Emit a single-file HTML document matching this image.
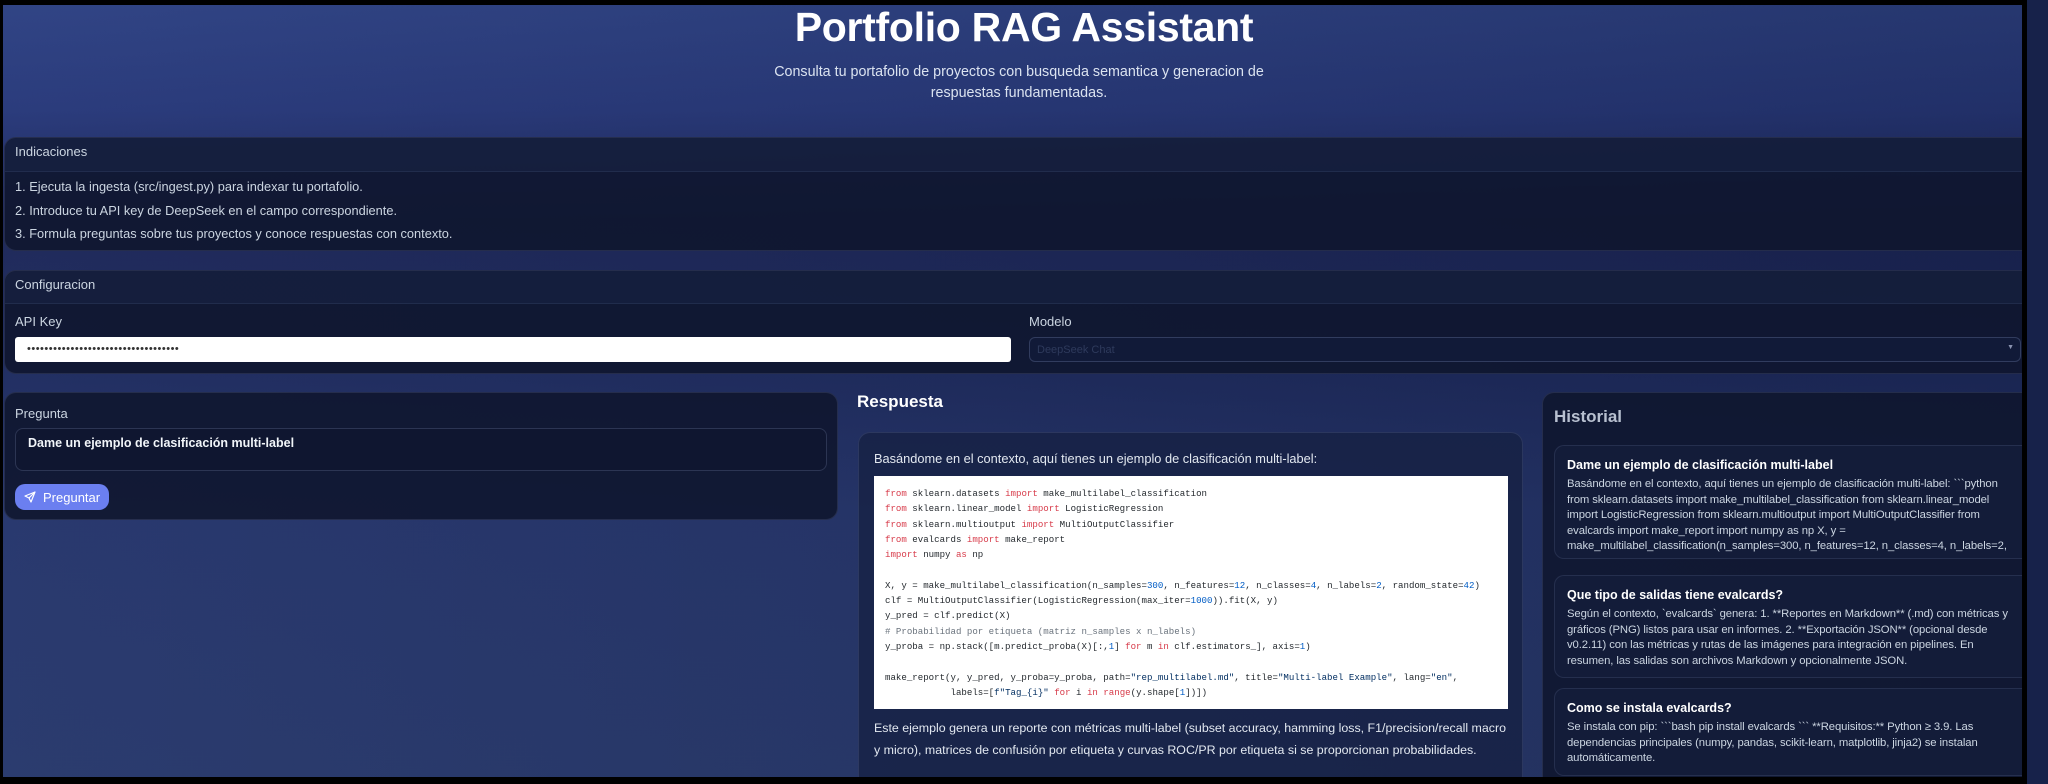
<!DOCTYPE html>
<html><head><meta charset="utf-8"><style>
*{box-sizing:border-box;margin:0;padding:0}
html,body{width:2048px;height:784px;overflow:hidden}
body{position:relative;font-family:"Liberation Sans",sans-serif;color:#e2e8f0;
background:linear-gradient(180deg,#2d4183 0%,#27387a 14%,#1c2658 28%,#1d2a5e 45%,#25356c 65%,#27386c 100%);}
body:before{content:"";position:absolute;inset:0;background:linear-gradient(90deg,rgba(255,255,255,0.02),rgba(0,0,0,0.15));}
.abs{position:absolute}
.title{left:0;width:2048px;top:2px;text-align:center;font-weight:bold;font-size:41px;letter-spacing:-0.3px;color:#fff;line-height:50px}
.sub{left:774px;width:490px;top:62px;text-align:center;font-size:14.3px;line-height:21px;color:#dbe3f0}
.panel{background:rgba(15,22,46,0.88);border:1px solid rgba(148,163,209,0.16);border-radius:12px}
.hd{height:34px;border-bottom:1px solid rgba(148,163,209,0.10);background:rgba(30,42,80,0.35);border-radius:12px 12px 0 0;font-size:13px;color:#cbd5e1;padding:6px 10px}
.lbl{font-size:13px;color:#cbd5e1}
.code{font-family:"Liberation Mono",monospace;font-size:9.1px;line-height:15.3px;color:#24292e;white-space:pre}
.k{color:#d73a49}.n{color:#005cc5}.s{color:#032f62}.c{color:#6a737d}
.item{position:absolute;left:11px;width:480px;background:rgba(20,29,58,0.9);border:1px solid rgba(148,163,209,0.14);border-radius:10px;padding:12px 12px 0 12px;overflow:hidden}
.item b{display:block;font-size:12.5px;color:#fff;margin-bottom:5px}
.item p{font-size:11.3px;line-height:15.6px;color:#cbd5e1;width:450px;letter-spacing:-0.1px}
</style></head><body>
<div class="abs title">Portfolio RAG Assistant</div>
<div class="abs sub">Consulta tu portafolio de proyectos con busqueda semantica y generacion de respuestas fundamentadas.</div>

<div class="abs panel" style="left:4px;top:137px;width:2034px;height:114px">
 <div class="hd">Indicaciones</div>
 <div class="abs lbl" style="left:10px;top:37px;line-height:23.5px;font-size:12.8px">1. Ejecuta la ingesta (src/ingest.py) para indexar tu portafolio.<br>2. Introduce tu API key de DeepSeek en el campo correspondiente.<br>3. Formula preguntas sobre tus proyectos y conoce respuestas con contexto.</div>
</div>

<div class="abs panel" style="left:4px;top:270px;width:2034px;height:104px">
 <div class="hd" style="height:33px">Configuracion</div>
 <div class="abs lbl" style="left:10px;top:43px">API Key</div>
 <div class="abs" style="left:10px;top:66px;width:996px;height:25px;background:#fff;border-radius:3px;color:#333;font-size:11px;padding:6px 12px;letter-spacing:0.5px">•••••••••••••••••••••••••••••••••••</div>
 <div class="abs lbl" style="left:1024px;top:43px">Modelo</div>
 <div class="abs" style="left:1024px;top:66px;width:992px;height:25px;background:#111a38;border:1px solid rgba(148,163,209,0.25);border-radius:6px;font-size:11px;color:#2e3a5c;padding:6px 7px">DeepSeek Chat<span style="position:absolute;right:6px;top:6px;color:#8a93b0;font-size:7px">▼</span></div>
</div>

<div class="abs panel" style="left:4px;top:392px;width:834px;height:128px">
 <div class="abs lbl" style="left:10px;top:13px">Pregunta</div>
 <div class="abs" style="left:10px;top:35px;width:812px;height:43px;background:#0f1630;border:1px solid rgba(148,163,209,0.22);border-radius:8px;font-size:12.5px;font-weight:bold;color:#f1f5f9;padding:7px 12px">Dame un ejemplo de clasificación multi-label</div>
 <div class="abs" style="left:10px;top:91px;width:94px;height:26px;background:#6b7ff0;border-radius:10px;color:#fff;font-size:13px;padding:6px 0 0 28px">
  <svg class="abs" style="left:9px;top:7px" width="12" height="12" viewBox="0 0 24 24" fill="none" stroke="#fff" stroke-width="2.4" stroke-linejoin="round"><path d="M22 2 2 10l8 4 4 8z"/><path d="M22 2 10 14"/></svg>Preguntar</div>
</div>

<div class="abs" style="left:857px;top:392px;font-size:17px;font-weight:bold;color:#fff">Respuesta</div>
<div class="abs panel" style="left:858px;top:432px;width:665px;height:360px;background:rgba(22,32,66,0.75)">
 <div class="abs" style="left:15px;top:18px;font-size:12.8px;color:#e2e8f0">Basándome en el contexto, aquí tienes un ejemplo de clasificación multi-label:</div>
 <div class="abs code" style="left:15px;top:43px;width:634px;height:233px;background:#fff;padding:10px 0 0 11px"><span class="k">from</span> sklearn.datasets <span class="k">import</span> make_multilabel_classification
<span class="k">from</span> sklearn.linear_model <span class="k">import</span> LogisticRegression
<span class="k">from</span> sklearn.multioutput <span class="k">import</span> MultiOutputClassifier
<span class="k">from</span> evalcards <span class="k">import</span> make_report
<span class="k">import</span> numpy <span class="k">as</span> np

X, y = make_multilabel_classification(n_samples=<span class="n">300</span>, n_features=<span class="n">12</span>, n_classes=<span class="n">4</span>, n_labels=<span class="n">2</span>, random_state=<span class="n">42</span>)
clf = MultiOutputClassifier(LogisticRegression(max_iter=<span class="n">1000</span>)).fit(X, y)
y_pred = clf.predict(X)
<span class="c"># Probabilidad por etiqueta (matriz n_samples x n_labels)</span>
y_proba = np.stack([m.predict_proba(X)[:,<span class="n">1</span>] <span class="k">for</span> m <span class="k">in</span> clf.estimators_], axis=<span class="n">1</span>)

make_report(y, y_pred, y_proba=y_proba, path=<span class="s">"rep_multilabel.md"</span>, title=<span class="s">"Multi-label Example"</span>, lang=<span class="s">"en"</span>,
            labels=[<span class="s">f"Tag_{i}"</span> <span class="k">for</span> i <span class="k">in</span> <span class="k">range</span>(y.shape[<span class="n">1</span>])])</div>
 <div class="abs" style="left:15px;top:284px;width:636px;font-size:12.4px;line-height:22px;color:#e2e8f0">Este ejemplo genera un reporte con métricas multi-label (subset accuracy, hamming loss, F1/precision/recall macro y micro), matrices de confusión por etiqueta y curvas ROC/PR por etiqueta si se proporcionan probabilidades.</div>
</div>

<div class="abs panel" style="left:1542px;top:392px;width:496px;height:400px">
 <div class="abs" style="left:11px;top:14px;font-size:17px;font-weight:bold;color:#b8c0d0">Historial</div>
 <div class="item" style="top:52px;height:114px"><b>Dame un ejemplo de clasificación multi-label</b><p>Basándome en el contexto, aquí tienes un ejemplo de clasificación multi-label: &#96;&#96;&#96;python from sklearn.datasets import make_multilabel_classification from sklearn.linear_model import LogisticRegression from sklearn.multioutput import MultiOutputClassifier from evalcards import make_report import numpy as np X, y = make_multilabel_classification(n_samples=300, n_features=12, n_classes=4, n_labels=2,</p></div>
 <div class="item" style="top:182px;height:103px"><b>Que tipo de salidas tiene evalcards?</b><p>Según el contexto, &#96;evalcards&#96; genera: 1. **Reportes en Markdown** (.md) con métricas y gráficos (PNG) listos para usar en informes. 2. **Exportación JSON** (opcional desde v0.2.11) con las métricas y rutas de las imágenes para integración en pipelines. En resumen, las salidas son archivos Markdown y opcionalmente JSON.</p></div>
 <div class="item" style="top:295px;height:88px"><b>Como se instala evalcards?</b><p>Se instala con pip: &#96;&#96;&#96;bash pip install evalcards &#96;&#96;&#96; **Requisitos:** Python ≥ 3.9. Las dependencias principales (numpy, pandas, scikit-learn, matplotlib, jinja2) se instalan automáticamente.</p></div>
</div>

<div class="abs" style="left:0;top:0;width:2048px;height:5px;background:#000"></div>
<div class="abs" style="left:0;top:0;width:3px;height:784px;background:#000"></div>
<div class="abs" style="left:2022px;top:0;width:5px;height:784px;background:#000"></div>
<div class="abs" style="left:0;top:777px;width:2027px;height:7px;background:#000"></div>
<div class="abs" style="left:2027px;top:0;width:21px;height:784px;background:#17224a"></div>
</body></html>
